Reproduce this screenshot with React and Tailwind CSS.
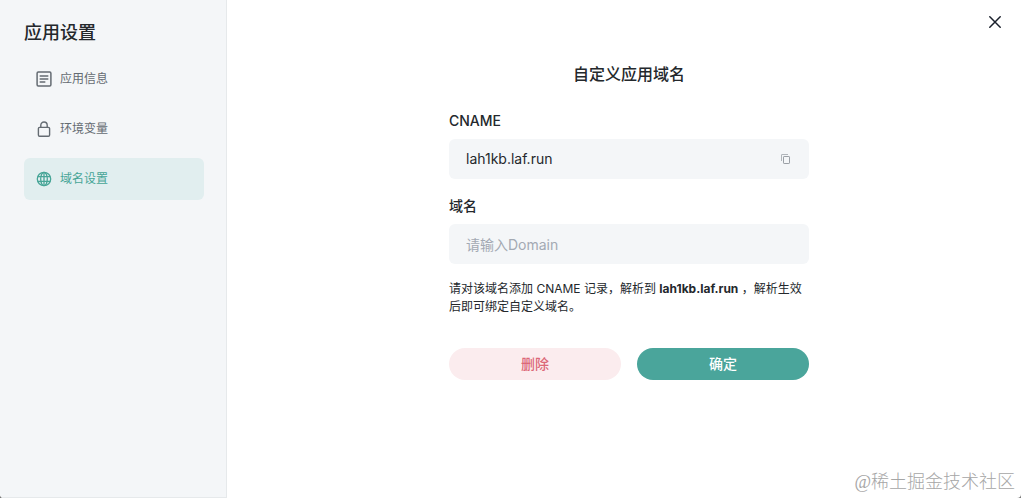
import { useState } from 'react';

const InfoIcon = () => (
  <svg className="w-4 h-4" viewBox="0 0 16 16" fill="none" stroke="currentColor" strokeWidth="1.5" strokeLinecap="round">
    <rect x="1.1" y="1.1" width="13.8" height="13.8" rx="1.2" />
    <path d="M4.2 5h7.6M4.2 8h7.6M4.2 11h4.6" />
  </svg>
);

const LockIcon = () => (
  <svg className="w-4 h-4" viewBox="0 0 16 16" fill="none" stroke="currentColor" strokeWidth="1.4">
    <rect x="2.4" y="6.4" width="11.2" height="8.8" rx="1.2" />
    <path d="M4.8 6.4V4.2a3.2 3.2 0 0 1 6.4 0v2.2" />
  </svg>
);

const GlobeIcon = () => (
  <svg className="w-4 h-4" viewBox="0 0 16 16" fill="none" stroke="currentColor" strokeWidth="1.3">
    <circle cx="8" cy="8" r="6.7" />
    <ellipse cx="8" cy="8" rx="3.3" ry="6.7" />
    <path d="M8 1.3v13.4M1.8 5.7h12.4M1.8 10.3h12.4" />
  </svg>
);

const CopyIcon = () => (
  <svg className="w-3 h-3" viewBox="0 0 12 12" fill="none" stroke="currentColor" strokeWidth="1">
    <path d="M1.5 8V1.9c0-.3.1-.4.4-.4H8" opacity="0.75" />
    <rect x="3.5" y="3.5" width="6" height="7" rx="0.6" />
  </svg>
);

const tabs = [
  { key: 'info', label: '应用信息', icon: InfoIcon },
  { key: 'env', label: '环境变量', icon: LockIcon },
  { key: 'domain', label: '域名设置', icon: GlobeIcon },
];

const CNAME = 'lah1kb.laf.run';

const App = () => {
  const [active, setActive] = useState('domain');
  const [domain, setDomain] = useState('');

  return (
    <div className="bg-[#777777] font-['Inter','Noto_Sans_CJK_SC',sans-serif] text-[#24282c]">
      <div className="relative flex min-h-screen overflow-hidden rounded-b-sm bg-white">
        {/* Sidebar */}
        <aside className="w-[227px] shrink-0 border-r border-b border-[#e6e9eb] bg-[#f4f6f8] pl-6 pr-[22px] pt-5">
          <h1 className="text-lg leading-[26px] font-medium">应用设置</h1>
          <nav className="mt-3 flex flex-col gap-2">
            {tabs.map(({ key, label, icon: Icon }) => (
              <button
                key={key}
                type="button"
                onClick={() => setActive(key)}
                className={`flex h-[42px] items-center gap-2 rounded-md px-3 text-xs
                  ${active === key ? 'bg-[#e1eeef] text-[#47a597]' : 'text-[#646b72]'}`}
              >
                <Icon />
                {label}
              </button>
            ))}
          </nav>
        </aside>

        {/* Domain form */}
        <main className="flex flex-1 justify-center pl-2.5 pt-[62px]">
          <form className="w-[360px]" onSubmit={(e) => e.preventDefault()}>
            <h2 className="text-center text-base leading-6 font-medium">自定义应用域名</h2>

            <label htmlFor="cname" className="mt-[25px] block text-sm leading-5 font-medium">CNAME</label>
            <div className="mt-2 flex h-10 items-center rounded-md bg-[#f4f6f8] px-[17px]">
              <input id="cname" readOnly value={CNAME} className="min-w-0 flex-1 bg-transparent text-sm outline-none" />
              <button
                type="button"
                aria-label="复制"
                className="text-[#9a9fa5]"
                onClick={() => navigator.clipboard?.writeText(CNAME)}
              >
                <CopyIcon />
              </button>
            </div>

            <label htmlFor="domain" className="mt-[17px] block text-sm leading-5 font-medium">域名</label>
            <input
              id="domain"
              value={domain}
              onChange={(e) => setDomain(e.target.value)}
              placeholder="请输入Domain"
              className="mt-2 h-10 w-full rounded-md bg-[#f4f6f8] px-[17px] text-sm outline-none placeholder:text-[#a3a9b3]"
            />

            <p className="mt-4 text-xs leading-[18px]">
              请对该域名添加 CNAME 记录，解析到 <b className="font-bold">{CNAME}</b> ，解析生效后即可绑定自定义域名。
            </p>

            <div className="mt-8 flex gap-4">
              <button type="button" className="h-8 flex-1 rounded-full bg-[#fbecee] text-sm font-medium text-[#dc6878]">
                删除
              </button>
              <button type="submit" className="h-8 flex-1 rounded-full bg-[#4aa59b] text-sm font-medium text-white">
                确定
              </button>
            </div>
          </form>
        </main>

        <button type="button" aria-label="关闭" className="absolute right-5 top-4 text-[#1a202c]">
          <svg className="w-3 h-3" viewBox="0 0 12 12" fill="none" stroke="currentColor" strokeWidth="1.5" strokeLinecap="round">
            <path d="M0.8 0.8l10.4 10.4M11.2 0.8L0.8 11.2" />
          </svg>
        </button>

        <span className="absolute bottom-1 right-1.5 font-['Liberation_Serif','Noto_Sans_CJK_SC',serif] text-lg leading-6 font-light text-[#a6a6a6]">
          @稀土掘金技术社区
        </span>
      </div>
    </div>
  );
};

export default App;
